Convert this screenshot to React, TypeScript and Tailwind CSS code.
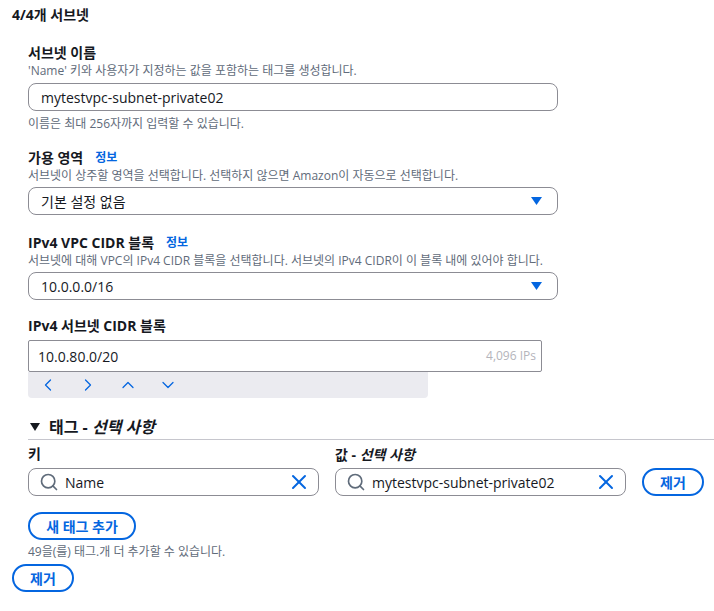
import { ChevronDown, ChevronLeft, ChevronRight, ChevronUp, Search, X } from "lucide-react"

const Caret = () => (
  <svg width="11" height="8" viewBox="0 0 11 8" className="text-[#0466e0]">
    <path d="M0 0h11L5.5 8z" fill="currentColor" />
  </svg>
)

const Label = ({ text, info }: { text: string; info?: boolean }) => (
  <div className="flex h-[20px] items-center gap-[12px] text-[14px] leading-[20px] font-bold text-[#16191f]">
    <span>{text}</span>
    {info && <span className="text-[12px] text-[#0466e0]">정보</span>}
  </div>
)

const Desc = ({ text }: { text: string }) => (
  <p className="text-[12px] leading-[16px] text-[#5f6b7a]">{text}</p>
)

const SelectBox = ({ value }: { value: string }) => (
  <div className="mt-[3px] flex h-[28px] w-[530px] items-center justify-between rounded-[8px] border border-[#8c8c94] pr-[15px] pl-[12px] text-[14px]">
    <span>{value}</span>
    <Caret />
  </div>
)

const TagInput = ({ value }: { value: string }) => (
  <div className="flex h-[28px] w-[291px] items-center rounded-[8px] border border-[#8c8c94] pr-[7px] pl-[10px] text-[14px]">
    <Search size={20} strokeWidth={2} className="text-[#5f6b7a]" />
    <span className="ml-[6px] flex-1">{value}</span>
    <X size={24} strokeWidth={2} className="text-[#0466e0]" />
  </div>
)

const OutlineButton = ({ text, width }: { text: string; width: string }) => (
  <button className={`flex h-[28px] items-center justify-center rounded-full border-2 border-[#0466e0] text-[14px] font-bold text-[#0466e0] ${width}`}>
    {text}
  </button>
)

export default function App() {
  return (
    <div className="h-[611px] w-[714px] overflow-hidden bg-white pt-[5px] pl-[12px] font-['Open_Sans','Noto_Sans_CJK_KR',sans-serif] text-[#16191f]">
      <h2 className="text-[14px] leading-[20px] font-bold">4/4개 서브넷</h2>

      <div className="pl-[16px]">
        <div className="mt-[18px]">
          <Label text="서브넷 이름" />
          <Desc text="'Name' 키와 사용자가 지정하는 값을 포함하는 태그를 생성합니다." />
          <div className="mt-[4px] flex h-[28px] w-[530px] items-center rounded-[8px] border border-[#8c8c94] pl-[12px] text-[14px]">
            mytestvpc-subnet-private02
          </div>
          <div className="mt-[5px]">
            <Desc text="이름은 최대 256자까지 입력할 수 있습니다." />
          </div>
        </div>

        <div className="mt-[16px]">
          <Label text="가용 영역" info />
          <Desc text="서브넷이 상주할 영역을 선택합니다. 선택하지 않으면 Amazon이 자동으로 선택합니다." />
          <SelectBox value="기본 설정 없음" />
        </div>

        <div className="mt-[18px]">
          <Label text="IPv4 VPC CIDR 블록" info />
          <Desc text="서브넷에 대해 VPC의 IPv4 CIDR 블록을 선택합니다. 서브넷의 IPv4 CIDR이 이 블록 내에 있어야 합니다." />
          <SelectBox value="10.0.0.0/16" />
        </div>

        <div className="mt-[16px]">
          <Label text="IPv4 서브넷 CIDR 블록" />
          <div className="mt-[4px] flex h-[32px] w-[514px] items-center justify-between rounded-[2px] border border-[#8c8c94] pr-[5px] pl-[9px] text-[14px]">
            <span>10.0.80.0/20</span>
            <span className="text-[12px] text-[#b4b4bb]">4,096 IPs</span>
          </div>
          <div className="flex h-[26px] w-[400px] items-center gap-[20px] rounded-b-[4px] bg-[#ebebf0] pl-[10px] text-[#0466e0]">
            <ChevronLeft size={20} strokeWidth={1.5} />
            <ChevronRight size={20} strokeWidth={1.5} />
            <ChevronUp size={20} strokeWidth={1.5} />
            <ChevronDown size={20} strokeWidth={1.5} />
          </div>
        </div>

        <div className="mt-[18px] flex h-[24px] items-center border-b border-[#c6c6cd] pb-[2px] text-[16px] font-bold">
          <svg width="10" height="8" viewBox="0 0 10 8" className="mr-[9px] ml-[2px]">
            <path d="M0 0h10L5 8z" fill="#16191f" />
          </svg>
          <span>태그 - <em>선택 사항</em></span>
        </div>

        <div className="mt-[4px] flex gap-[16px]">
          <div>
            <Label text="키" />
            <div className="mt-[4px]">
              <TagInput value="Name" />
            </div>
          </div>
          <div>
            <div className="flex h-[20px] items-center text-[14px] font-bold">
              <span>값 - <em>선택 사항</em></span>
            </div>
            <div className="mt-[4px]">
              <TagInput value="mytestvpc-subnet-private02" />
            </div>
          </div>
          <div className="pt-[24px]">
            <OutlineButton text="제거" width="w-[62px]" />
          </div>
        </div>

        <div className="mt-[16px]">
          <OutlineButton text="새 태그 추가" width="w-[108px]" />
        </div>
        <div className="mt-[4px]">
          <Desc text="49을(를) 태그.개 더 추가할 수 있습니다." />
        </div>
      </div>

      <div className="mt-[4px]">
        <OutlineButton text="제거" width="w-[62px]" />
      </div>
    </div>
  )
}
